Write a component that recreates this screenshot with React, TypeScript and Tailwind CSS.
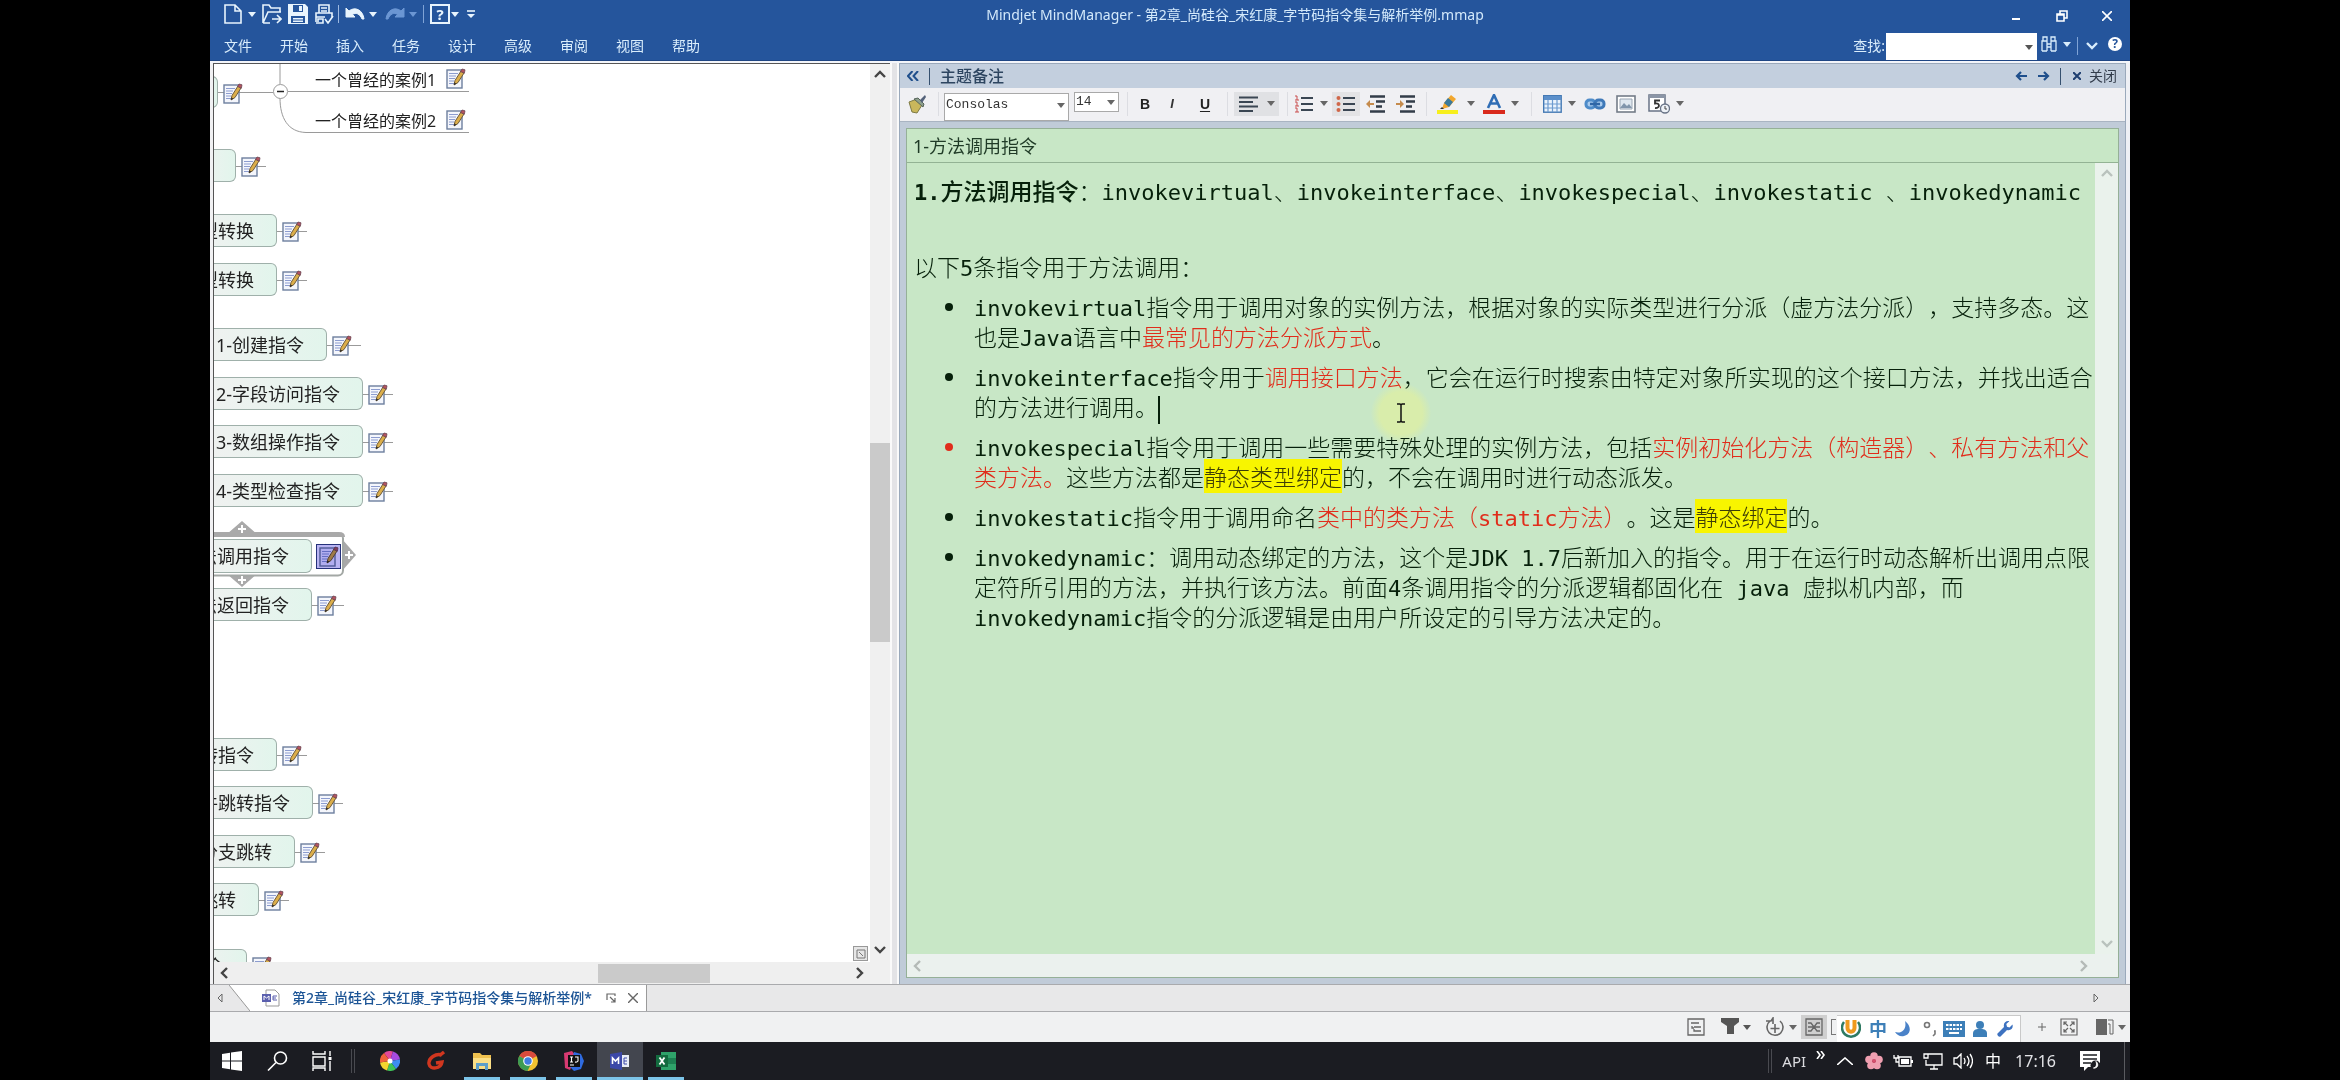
import type { ReactNode } from "react";

const ui = "font-['Noto_Sans','Noto_Sans_CJK_SC',sans-serif]";

type P = { className?: string; children?: ReactNode };

function Caret({ className = "" }: P) {
  return (
    <svg viewBox="0 0 8 5" className={`h-[5px] w-2 shrink-0 ${className}`} fill="currentColor" aria-hidden="true">
      <path d="M0 0h8L4 5z" />
    </svg>
  );
}

function Chevron({ dir, className = "" }: { dir: "up" | "down" | "left" | "right"; className?: string }) {
  const d = {
    up: "M1 9l5-5 5 5",
    down: "M1 3l5 5 5-5",
    left: "M9 1L4 6l5 5",
    right: "M3 1l5 5-5 5",
  }[dir];
  return (
    <svg viewBox="0 0 12 12" className={`size-3 shrink-0 ${className}`} fill="none" stroke="currentColor" strokeWidth="2.4" aria-hidden="true">
      <path d={d} />
    </svg>
  );
}

function Btn({ label, className = "", children }: P & { label: string }) {
  return (
    <button type="button" aria-label={label} className={`flex shrink-0 items-center justify-center ${className}`}>
      {children}
    </button>
  );
}

function Svg({ box, className = "", children }: P & { box: string }) {
  return (
    <svg viewBox={box} className={`shrink-0 ${className}`} fill="none" stroke="currentColor" strokeWidth="1.6" aria-hidden="true">
      {children}
    </svg>
  );
}

function NoteIcon() {
  return (
    <svg viewBox="0 0 20 21" className="h-[21px] w-5 shrink-0" aria-hidden="true">
      <rect x="1" y="2" width="15" height="18" fill="#f4f6fc" stroke="#6d7f9e" strokeWidth="1.4" />
      <path d="M3 5.5h9M3 8h7M3 10.500h6M3 13h5M3 15.500h5" stroke="#8c9ccf" strokeWidth="1.2" />
      <path d="M8 17l1-4.500L15 3l3 2-6 9.500z" fill="#dcae4a" stroke="#6e5b3c" strokeWidth="1" />
      <path d="M14.500 3.500L16 1l3 .8-.6 3.400z" fill="#b5535e" stroke="#6b4654" strokeWidth=".8" />
      <path d="M8 17l.5-2.500 1.800 1.300z" fill="#222" />
    </svg>
  );
}

function Title() {
  return (
    <div className="grid h-8 grid-cols-[1fr_auto_1fr] items-center">
      <div className="flex h-8 items-center pb-1 pl-3.5 text-[#e8f4fd]">
        <Btn label="新建" className="w-[18px]">
          <Svg box="0 0 18 20" className="h-5 w-[18px]">
            <path d="M1 1h10l6 6v12H1zM11 1v6h6" />
          </Svg>
        </Btn>
        <Caret className="ml-1.5" />
        <Btn label="打开" className="ml-1.5 w-5">
          <Svg box="0 0 20 20" className="size-5">
            <path d="M1 19V1h6l2 3h9v4M1 19l5-11h13M1 19h7M10 15h8M15 11l4 4-4 4" />
          </Svg>
        </Btn>
        <Btn label="保存" className="ml-1.5 w-5">
          <svg viewBox="0 0 20 20" className="size-5" fill="currentColor" aria-hidden="true">
            <path fillRule="evenodd" d="M0 0h17l3 3v17H0zM5 1v7h10V1zM3 12v7h14v-7zM11 2h3v5h-3zM5 14h10v1.500H5zM5 16.500h10V18H5z" />
          </svg>
        </Btn>
        <Btn label="打印" className="ml-1.5 w-5">
          <Svg box="0 0 20 20" className="size-5">
            <path d="M5 9V1h10v8M7 4h6M7 7h6M2 18V9h16v5M2 13h9M4 18v-3h5v4H2M11 15l3 4 5-7" />
          </Svg>
        </Btn>
        <span className="ml-1 h-[18px] w-px bg-[#9db9e0]" />
        <Btn label="撤销" className="ml-1.5 w-5">
          <svg viewBox="0 0 20 16" className="h-4 w-5" aria-hidden="true">
            <path d="M1 2v9h9L7.500 8.500C11 6 15 8 17 13h2C18 4 10 0 4 5z" fill="currentColor" stroke="currentColor" />
          </svg>
        </Btn>
        <Caret className="ml-1" />
        <Btn label="重做" className="ml-2 w-5 text-[#6b96d3]">
          <svg viewBox="0 0 20 16" className="h-4 w-5 -scale-x-100" aria-hidden="true">
            <path d="M1 2v9h9L7.500 8.500C11 6 15 8 17 13h2C18 4 10 0 4 5z" fill="currentColor" stroke="currentColor" />
          </svg>
        </Btn>
        <Caret className="ml-1 text-[#6b96d3]" />
        <span className="ml-1.5 h-[18px] w-px bg-[#7fa3d6]" />
        <Btn label="帮助" className="ml-1.5 size-5 border-2 border-current text-[15px] leading-none font-bold">
          ?
        </Btn>
        <Caret className="ml-px" />
        <Svg box="0 0 8 8" className="ml-2 size-2">
          <path d="M0 1h8" />
          <path d="M0 4h8L4 8z" fill="currentColor" stroke="none" />
        </Svg>
      </div>
      <h1 className="mb-0.5 ml-[130px] text-sm text-[#d3e9fb]">Mindjet MindManager - 第2章_尚硅谷_宋红康_字节码指令集与解析举例.mmap</h1>
      <div className="flex h-8 items-center justify-end gap-[34px] pr-[18px] text-white">
        <Btn label="最小化" className="mt-1.5 size-3">
          <span className="h-0.5 w-2 bg-white" />
        </Btn>
        <Btn label="还原" className="size-3">
          <Svg box="0 0 12 12" className="size-3">
            <path d="M1 4h7v7H1zM4 4V1h7v7H8M1 5h7" />
          </Svg>
        </Btn>
        <Btn label="关闭窗口" className="size-2.5">
          <Svg box="0 0 10 10" className="size-2.5">
            <path d="M0 0l10 10M10 0L0 10" />
          </Svg>
        </Btn>
      </div>
    </div>
  );
}

const menus = ["文件", "开始", "插入", "任务", "设计", "高级", "审阅", "视图", "帮助"];

function MenuBar() {
  return (
    <div className="flex h-7 items-center pr-2 pl-3.5 text-sm text-[#d9edfc]">
      <nav className="flex flex-1 gap-7">
        {menus.map((m) => (
          <button key={m} type="button" className="shrink-0">
            {m}
          </button>
        ))}
      </nav>
      <label htmlFor="find" className="mr-px">
        查找:
      </label>
      <div className="relative h-[27px] w-[151px] bg-white">
        <input id="find" type="text" className="size-full bg-transparent px-1 text-black outline-none" />
        <Caret className="absolute top-3 right-1 text-[#555]" />
      </div>
      <Btn label="查找主题" className="mb-1 ml-1 w-4">
        <Svg box="0 0 16 16" className="size-4">
          <path d="M2 1h4v4H2zM10 1h4v4h-4zM1 15V5h5v10M10 15V5h5v10M6 8h4M6 11h4M1 15h5M10 15h5" strokeWidth="1.300" />
        </Svg>
      </Btn>
      <Caret className="mb-1 ml-1.5" />
      <span className="ml-1.5 h-[18px] w-px bg-[#7fa3d6]" />
      <Chevron dir="down" className="ml-2 size-2.5" />
      <Btn label="帮助主题" className="mb-1 ml-2.5 size-3.5 rounded-full bg-white text-xs leading-none font-bold text-[#25559c]">
        ?
      </Btn>
    </div>
  );
}

/* Topic boxes run off the left side of the map; each keeps its note marker on the right. */
const topics = [
  { text: "", box: "top-[12px] h-[32px] w-[24px]", line: "w-[55px]" },
  { text: "", box: "top-[85px] h-[33px] w-[42px]", line: "w-[30px]" },
  { text: "型转换", box: "top-[150px] h-[33px] w-[83px]", line: "w-[30px]" },
  { text: "型转换", box: "top-[199px] h-[33px] w-[83px]", line: "w-[30px]" },
  { text: "1-创建指令", box: "top-[264px] h-[33px] w-[133px]", line: "w-[34px]" },
  { text: "2-字段访问指令", box: "top-[313px] h-[33px] w-[169px]", line: "w-[30px]" },
  { text: "3-数组操作指令", box: "top-[361px] h-[33px] w-[169px]", line: "w-[30px]" },
  { text: "4-类型检查指令", box: "top-[410px] h-[33px] w-[169px]", line: "w-[30px]" },
  { text: "法返回指令", box: "top-[524px] h-[33px] w-[118px]", line: "w-[32px]" },
  { text: "转指令", box: "top-[674px] h-[33px] w-[83px]", line: "w-[30px]" },
  { text: "件跳转指令", box: "top-[722px] h-[33px] w-[119px]", line: "w-[30px]" },
  { text: "分支跳转", box: "top-[771px] h-[33px] w-[101px]", line: "w-[30px]" },
  { text: "跳转", box: "top-[819px] h-[33px] w-[65px]", line: "w-[30px]" },
  { text: "令", box: "top-[885px] h-[33px] w-[53px]", line: "w-[24px]" },
];

function TopicText({ children }: P) {
  return (
    <span className="flex size-full items-center justify-end overflow-hidden rounded-r-md border border-l-0 border-[#9fb0aa] bg-linear-to-r from-[#f1f1f1] to-[#e2f5ec] pr-[22px] text-lg leading-none whitespace-nowrap text-[#222]">
      {children}
    </span>
  );
}

function MindMap() {
  return (
    <div className="relative min-h-0 flex-1 overflow-hidden bg-white">
      <svg viewBox="0 0 270 80" className="absolute top-0 left-0 h-20 w-[270px]" fill="none" stroke="#9a9a9a" aria-hidden="true">
        <path d="M66 0v20M74 27.500h181M66 34c0 20 8 34 26 34.500h163" />
        <circle cx="66.500" cy="27.500" r="7" fill="#fff" />
        <path d="M63 27.500h7" stroke="#222" strokeWidth="1.500" />
      </svg>
      <div className="absolute top-1 left-[101px] flex items-start gap-2.5 text-base leading-6 text-[#222]">
        <span>一个曾经的案例1</span>
        <NoteIcon />
      </div>
      <div className="absolute top-[45px] left-[101px] flex items-start gap-2.5 text-base leading-6 text-[#222]">
        <span>一个曾经的案例2</span>
        <NoteIcon />
      </div>
      {topics.map((t, i) => (
        <div key={i} className={`absolute left-[-20px] ${t.box}`}>
          <div className="relative flex size-full">
            <TopicText>{t.text}</TopicText>
            <span className={`absolute top-1/2 left-full h-px bg-[#9a9a9a] ${t.line}`} />
            <span className="absolute top-[7px] left-full ml-[5px]">
              <NoteIcon />
            </span>
          </div>
        </div>
      ))}
      <div className="absolute top-[457px] left-[-20px] h-[67px] w-[170px]">
        <svg viewBox="0 0 170 67" className="absolute inset-0 size-full" aria-hidden="true">
          <path d="M48 0l15 13H33zM48 66l15-13H33zM162 34l-14-16v32z" fill="#a9a9a9" />
          <rect x="-10" y="12.500" width="159" height="42" rx="5" fill="#fff" stroke="#a3a8a5" strokeWidth="2" />
          <path d="M0 11h145q6 0 6 5H0z" fill="#a9a9a9" />
          <path d="M48 4v8M44 8h8M48 55v8M44 59h8M155 30v8M151 34h8" stroke="#fff" strokeWidth="2" />
        </svg>
        <div className="absolute top-[18px] left-0 h-[34px] w-[118px]">
          <TopicText>法调用指令</TopicText>
        </div>
        <span className="absolute top-[23px] left-[122px] flex size-[25px] items-center justify-center border border-[#26327a] bg-[#b9b4f2]">
          <span className="mix-blend-multiply">
            <NoteIcon />
          </span>
        </span>
      </div>
      <Btn label="导航图" className="absolute right-0.5 bottom-px size-[15px] border border-[#999] bg-[#e6e6e6] text-[#777]">
        <Svg box="0 0 10 10" className="size-2.5">
          <path d="M1 1h8v8H1zM3 3l4 4" strokeWidth="1" />
        </Svg>
      </Btn>
    </div>
  );
}

function MapPane() {
  return (
    <div className="flex min-h-0 min-w-0 bg-[#f1f1f3] pl-[3px]">
      <div className="flex min-w-0 flex-1 border-t border-l border-[#555]">
        <div className="flex min-w-0 flex-1 flex-col">
          <MindMap />
          <div className="flex h-[22px] shrink-0 items-center bg-[#efefef] px-1 text-[#444]">
            <Chevron dir="left" />
            <div className="relative h-[19px] flex-1">
              <span className="absolute top-0 left-[59%] h-full w-[18%] bg-[#cacaca]" />
            </div>
            <Chevron dir="right" />
          </div>
        </div>
        <div className="flex w-5 shrink-0 flex-col items-center bg-[#f0f0f0] pt-1 pb-7 text-[#444]">
          <Chevron dir="up" />
          <div className="relative w-full flex-1">
            <span className="absolute top-[42%] left-0 h-[23%] w-full bg-[#cacaca]" />
          </div>
          <Chevron dir="down" />
        </div>
      </div>
      <div className="w-[9px] shrink-0 border-x-2 border-[#fafafa] bg-[#e3e3e6]" />
    </div>
  );
}

function Sep({ className = "" }: P) {
  return <span className={`h-6 w-px shrink-0 bg-[#dcdde2] ${className}`} />;
}

function ListIcon({ kind }: { kind: "num" | "dot" | "out" | "in" }) {
  const rows = [3, 9, 15];
  return (
    <svg viewBox="0 0 20 18" className="h-[18px] w-5" aria-hidden="true">
      {kind === "num" || kind === "dot" ? (
        <>
          <path d="M7 3h12M7 9h12M7 15h12" stroke="#3a4653" strokeWidth="1.800" />
          {kind === "dot"
            ? rows.map((y) => <circle key={y} cx="2.500" cy={y} r="2" fill="#d0674a" />)
            : rows.map((y) => <path key={y} d={`M1 ${y - 2}h2v4M1 ${y + 2}h4`} stroke="#c94d4d" strokeWidth="1" fill="none" />)}
        </>
      ) : (
        <>
          <path d="M4 1.500h15M10 6.500h9M10 11.500h6M4 16.500h15" stroke="#333d49" strokeWidth="2.400" />
          <path d={kind === "out" ? "M0 9l4-4v3h4v2H4v3z" : "M8 9L4 5v3H0v2h4v3z"} fill="#c58b4c" />
        </>
      )}
    </svg>
  );
}

function NotesToolbar() {
  return (
    <div className="flex h-[33px] shrink-0 items-center bg-[#f0f0f3] pb-0.5 pl-[7px] text-[#666]">
      <Btn label="格式刷" className="w-5">
        <svg viewBox="0 0 20 20" className="size-5" aria-hidden="true">
          <path d="M2 8l8-3 5 6-5 8-5-1z" fill="#c9b75c" stroke="#7d7a45" />
          <path d="M7 5l9 8 1-3-6-6z" fill="#8ea08c" stroke="#56645a" />
          <path d="M13 6l5-5 1 2-4 6z" fill="#54627a" />
        </svg>
      </Btn>
      <Sep className="ml-[11px]" />
      <div className="relative ml-[5px] h-7 w-[125px] shrink-0">
        <select aria-label="字体" className="size-full appearance-none border border-[#a9a9a9] bg-white pb-1.5 pl-px font-['Liberation_Mono',monospace] text-[13px] text-[#333]">
          <option>Consolas</option>
        </select>
        <Caret className="absolute top-[13px] right-1" />
      </div>
      <div className="relative mb-1 ml-[5px] h-5 w-[45px] shrink-0">
        <select aria-label="字号" className="block size-full appearance-none border border-[#a9a9a9] bg-white pl-px font-['Liberation_Mono',monospace] text-[13px] leading-none text-[#333]">
          <option>14</option>
        </select>
        <Caret className="absolute top-2 right-1" />
      </div>
      <Sep className="ml-2" />
      <Btn label="加粗" className="ml-[11px] w-3 font-['Liberation_Sans',sans-serif] text-sm font-black text-[#222]">
        B
      </Btn>
      <Btn label="斜体" className="ml-4 w-2.5 font-['Liberation_Sans',sans-serif] text-[13px] font-bold text-[#333] italic">
        I
      </Btn>
      <Btn label="下划线" className="ml-5 w-4 font-['Liberation_Sans',sans-serif] text-sm font-bold text-[#222] underline underline-offset-2">
        U
      </Btn>
      <Sep className="ml-3.5" />
      <Btn label="对齐方式" className="ml-1.5 h-6 w-[45px] gap-2 bg-[#e0e1e4]">
        <Svg box="0 0 20 16" className="h-4 w-5 text-[#3a4653]">
          <path d="M0 1.500h19M0 6h14M0 10.500h19M0 15h14" strokeWidth="1.800" />
        </Svg>
        <Caret />
      </Btn>
      <Sep className="ml-2" />
      <Btn label="编号列表" className="ml-1.5 w-5">
        <ListIcon kind="num" />
      </Btn>
      <Caret className="ml-1.5" />
      <Btn label="项目符号" className="ml-1 h-6 w-7 bg-[#e3e3e5]">
        <ListIcon kind="dot" />
      </Btn>
      <Btn label="减少缩进" className="ml-1.5 w-5">
        <ListIcon kind="out" />
      </Btn>
      <Btn label="增加缩进" className="ml-2.5 w-5">
        <ListIcon kind="in" />
      </Btn>
      <Sep className="ml-2.5" />
      <Btn label="突出显示" className="ml-2.5 w-[22px]">
        <svg viewBox="0 0 22 20" className="h-5 w-[22px]" aria-hidden="true">
          <path d="M0 16h21v4H0z" fill="#f7ef1d" />
          <path d="M5 15l2-6 7-8 5 4-7 8z" fill="#f2a72e" />
          <path d="M7 9l4-5 5 4-4 5z" fill="#3b7a9c" />
          <path d="M3 15l2-2 2 2z" fill="#333" />
        </svg>
      </Btn>
      <Caret className="ml-2" />
      <Btn label="字体颜色" className="ml-2 w-[22px]">
        <svg viewBox="0 0 22 20" className="h-5 w-[22px]" aria-hidden="true">
          <path d="M0 16h22v4H0z" fill="#d92a1c" />
          <path d="M5 14l6-13 6 13M7.500 9.500h7" fill="none" stroke="#2f6db5" strokeWidth="2.600" />
        </svg>
      </Btn>
      <Caret className="ml-1.5" />
      <Sep className="ml-3" />
      <Btn label="表格" className="ml-[11px] w-[19px]">
        <svg viewBox="0 0 19 18" className="h-[18px] w-[19px]" aria-hidden="true">
          <rect x=".7" y=".7" width="17.500" height="16.500" fill="#eaf3fc" stroke="#4479b4" strokeWidth="1.400" />
          <path d="M1 1h17v4H1z" fill="#5b8fca" />
          <path d="M5 5v12M9.500 5v12M14 5v12M1 9h17M1 13h17" stroke="#6d9bcf" strokeWidth="1.200" />
        </svg>
      </Btn>
      <Caret className="ml-1.5" />
      <Btn label="超链接" className="ml-2 w-[22px]">
        <svg viewBox="0 0 22 14" className="h-3.5 w-[22px]" fill="none" aria-hidden="true">
          <rect x="2" y="3" width="9" height="8" rx="3.500" fill="#a9cbee" stroke="#4f8cc9" strokeWidth="3" />
          <rect x="11" y="3" width="9" height="8" rx="3.500" fill="#a9cbee" stroke="#3e78b8" strokeWidth="3" />
          <path d="M6 7h10" stroke="#2f66a6" strokeWidth="2.500" />
        </svg>
      </Btn>
      <Btn label="图片" className="ml-2.5 w-5">
        <svg viewBox="0 0 20 18" className="h-[18px] w-5" fill="none" aria-hidden="true">
          <rect x="1" y="1" width="18" height="16" fill="#fff" stroke="#747c88" strokeWidth="1.600" />
          <path d="M4 4h12v10H4z" fill="#dfe7ef" stroke="#9aa5b3" />
          <path d="M4 13l4-5 3 3 2-2 3 4z" fill="#8195ab" />
        </svg>
      </Btn>
      <Btn label="日期时间" className="ml-3 w-[22px]">
        <svg viewBox="0 0 22 20" className="h-5 w-[22px]" fill="none" aria-hidden="true">
          <path d="M1 1h16v16H1z" fill="#fff" stroke="#687386" strokeWidth="1.500" />
          <path d="M1 1h16v3H1z" fill="#8b95a6" />
          <path d="M12 6.500H7v3c5-1 5.500 5 0 4.500" stroke="#333" strokeWidth="1.800" />
          <circle cx="17" cy="14.500" r="4.500" fill="#eef2f7" stroke="#687386" strokeWidth="1.300" />
          <path d="M17 12v3h2" stroke="#444" />
        </svg>
      </Btn>
      <Caret className="ml-1.5" />
    </div>
  );
}

function L({ children }: P) {
  return <span className="font-['DejaVu_Sans_Mono',monospace] text-[22px] leading-none font-normal">{children}</span>;
}
function Red({ children }: P) {
  return <span className="text-[#e02d1b]">{children}</span>;
}
function Mark({ children }: P) {
  return <mark className="bg-[#f8f500] text-[#3d3d08]">{children}</mark>;
}
function Item({ red, children }: P & { red?: boolean }) {
  return (
    <li className="mb-2.5 flex">
      <span className={`mt-3 mr-[21px] size-2 shrink-0 rounded-full ${red ? "bg-[#e02d1b]" : "bg-[#06200a]"}`} />
      <p className="min-w-0">{children}</p>
    </li>
  );
}

function NotesBody() {
  return (
    <div className="relative min-w-0 flex-1 pt-3 pl-[7px] font-['Noto_Sans_CJK_SC',sans-serif] text-[23px] leading-[30px] font-light text-[#06200a] [text-spacing-trim:space-all]">
      <span className="absolute top-[220px] left-[464px] size-[60px] rounded-full bg-[radial-gradient(circle,#d9edab_0%,#d9edab_50%,transparent_72%)]" />
      <svg viewBox="0 0 10 20" className="absolute top-[240px] left-[489px] h-5 w-2.5" fill="none" stroke="#111" strokeWidth="1.500" aria-hidden="true">
        <path d="M1 1h3l1 1 1-1h3M5 2v16M1 19h3l1-1 1 1h3" />
      </svg>
      <div className="relative">
        <h2 className="mb-[46px] whitespace-nowrap">
          <b className="font-medium">
            <span className="font-['DejaVu_Sans_Mono',monospace] text-[22px] leading-none font-bold">1.</span>
            方法调用指令
          </b>
          ：<L>invokevirtual</L>、<L>invokeinterface</L>、<L>invokespecial</L>、<L>invokestatic </L>、<L>invokedynamic</L>
        </h2>
        <p className="mb-2.5">
          以下<L>5</L>条指令用于方法调用：
        </p>
        <ul className="pl-[31px]">
          <Item>
            <L>invokevirtual</L>指令用于调用对象的实例方法，根据对象的实际类型进行分派（虚方法分派），支持多态。这也是<L>Java</L>语言中
            <Red>最常见的方法分派方式</Red>。
          </Item>
          <Item>
            <L>invokeinterface</L>指令用于<Red>调用接口方法</Red>，它会在运行时搜索由特定对象所实现的这个接口方法，并找出适合的方法进行调用。
            <span className="-my-1 inline-block h-7 w-0.5 bg-[#06200a] align-middle" />
          </Item>
          <Item red>
            <L>invokespecial</L>指令用于调用一些需要特殊处理的实例方法，包括<Red>实例初始化方法（构造器）、私有方法和父类方法。</Red>
            这些方法都是<Mark>静态类型绑定</Mark>的，不会在调用时进行动态派发。
          </Item>
          <Item>
            <L>invokestatic</L>指令用于调用命名
            <Red>
              类中的类方法（<L>static</L>方法）
            </Red>
            。这是<Mark>静态绑定</Mark>的。
          </Item>
          <Item>
            <L>invokedynamic</L>：调用动态绑定的方法，这个是<L>JDK 1.7</L>后新加入的指令。用于在运行时动态解析出调用点限定符所引用的方法，并执行该方法。前面
            <L>4</L>条调用指令的分派逻辑都固化在<L> java </L>虚拟机内部，而<L>invokedynamic</L>指令的分派逻辑是由用户所设定的引导方法决定的。
          </Item>
        </ul>
      </div>
    </div>
  );
}

function NotesPane() {
  return (
    <section className="mr-1 flex min-h-0 min-w-0 flex-col border border-b-0 border-[#9aa9bb] bg-[#c0cbd8]">
      <header className="flex h-[24px] shrink-0 items-center bg-[#c3cfde] pr-2 pl-[7px] text-[#1f4f8c]">
        <Svg box="0 0 12 10" className="h-2.5 w-3">
          <path d="M5.500 0L1 5l4.500 5M11 0L6.500 5 11 10" strokeWidth="2" />
        </Svg>
        <span className="ml-2.5 h-[17px] w-px bg-[#35506f]" />
        <h2 className="ml-2.5 flex-1 text-base leading-6 font-medium text-[#2d4560]">主题备注</h2>
        <Btn label="上一个" className="w-3">
          <Svg box="0 0 12 10" className="h-2.5 w-3">
            <path d="M12 5H2M6 1L2 5l4 4" strokeWidth="2.200" />
          </Svg>
        </Btn>
        <Btn label="下一个" className="ml-[11px] w-3">
          <Svg box="0 0 12 10" className="h-2.5 w-3">
            <path d="M0 5h10M6 1l4 4-4 4" strokeWidth="2.200" />
          </Svg>
        </Btn>
        <span className="ml-2.5 h-[17px] w-px bg-[#35506f]" />
        <button type="button" className="ml-3 flex items-center gap-2 text-sm text-[#333d4c]">
          <Svg box="0 0 8 8" className="size-2 text-[#1f3f70]">
            <path d="M0 0l8 8M8 0L0 8" strokeWidth="2" />
          </Svg>
          关闭
        </button>
      </header>
      <NotesToolbar />
      <div className="flex min-h-0 flex-1 flex-col border-t border-[#a9b4c2] px-1.5 py-1.5">
        <div className="flex min-h-0 flex-1 flex-col border border-[#95b097] bg-[#c8e7c6]">
          <div className="flex h-[34px] shrink-0 items-center border-b border-[#93b394] pl-1.5 text-lg text-[#1f3a26]">1-方法调用指令</div>
          <div className="flex min-h-0 flex-1">
            <NotesBody />
            <div className="flex w-[23px] shrink-0 flex-col items-center justify-between bg-[#eaf2ec] py-1 text-[#b9c2bd]">
              <Chevron dir="up" />
              <Chevron dir="down" />
            </div>
          </div>
          <div className="flex h-[23px] shrink-0 items-center justify-between bg-[#ebf1ee] pr-7 pl-1 text-[#b4bab7]">
            <Chevron dir="left" />
            <Chevron dir="right" />
          </div>
        </div>
      </div>
    </section>
  );
}

function TabRow() {
  return (
    <div className="flex h-7 shrink-0 items-stretch border-y border-[#a9aaad] bg-[#e8e8e9] pr-[31px] text-[#666]">
      <Btn label="向左滚动" className="w-[19px]">
        <Svg box="0 0 6 10" className="h-2.5 w-1.5">
          <path d="M5 1v8L1 5z" strokeWidth="1" />
        </Svg>
      </Btn>
      <svg viewBox="0 0 21 26" className="h-full w-[21px]" preserveAspectRatio="none" aria-hidden="true">
        <path d="M0 0h21v26z" fill="#fff" />
        <path d="M0 0l21 26" stroke="#999" />
      </svg>
      <div className="flex items-center border-r border-[#9a9a9a] bg-white pr-2 pl-3">
        <svg viewBox="0 0 18 18" className="size-[18px]" fill="none" aria-hidden="true">
          <path d="M4 1h9l4 4v12H4z" fill="#fff" stroke="#999" />
          <path d="M0 5h9v8H0z" fill="#5a5fae" />
          <path d="M2 11V7l2.500 2L7 7v4" stroke="#fff" />
          <path d="M15 7h-4v4h4M11 9h3" stroke="#5a5fae" />
        </svg>
        <button type="button" className="ml-3 text-sm font-medium text-[#1d5596]">
          第2章_尚硅谷_宋红康_字节码指令集与解析举例*
        </button>
        <Btn label="弹出" className="ml-3.5">
          <Svg box="0 0 10 10" className="size-2.5">
            <path d="M1 7V1h8v2M4 4l5 5M9 5v4H5" strokeWidth="1.200" />
          </Svg>
        </Btn>
        <Btn label="关闭标签" className="ml-3">
          <Svg box="0 0 10 10" className="size-2.5">
            <path d="M0 0l10 10M10 0L0 10" strokeWidth="1.400" />
          </Svg>
        </Btn>
      </div>
      <span className="flex-1" />
      <Btn label="向右滚动">
        <Svg box="0 0 6 10" className="h-2.5 w-1.5">
          <path d="M1 1v8l4-4z" strokeWidth="1" />
        </Svg>
      </Btn>
    </div>
  );
}

function StatusBar() {
  return (
    <div className="flex h-[30px] shrink-0 items-center justify-end bg-[#f0f1f2] pr-1 text-[#666]">
      <Btn label="任务信息">
        <Svg box="0 0 18 18" className="size-[18px]">
          <path d="M1 1h16v16H1zM4 5h8M7 9h7M9 13h5M5 8v2h2M7 11v2h2" strokeWidth="1.300" />
        </Svg>
      </Btn>
      <Btn label="筛选" className="ml-4 gap-1 text-[#555]">
        <svg viewBox="0 0 18 18" className="size-[18px]" fill="currentColor" aria-hidden="true">
          <path d="M0 0h18v4l-5 4v8H6V8L0 4z" />
        </svg>
        <Caret />
      </Btn>
      <Btn label="显示分支" className="ml-3.5 gap-1">
        <Svg box="0 0 20 20" className="size-5">
          <path d="M5 4a8 8 0 1 0 10 0M10 7v9M5.500 11.500h9M1 4h5l2-3v6" />
        </Svg>
        <Caret />
      </Btn>
      <Btn label="导图视图" className="ml-1 h-6 w-[26px] bg-[#cfcfcf]">
        <Svg box="0 0 18 18" className="size-[18px]">
          <path d="M1 1h16v16H1zM3 5h3l6 8h3M3 13h3l6-8h3M3 9h12" strokeWidth="1.300" />
        </Svg>
      </Btn>
      <span className="ml-1 h-4 w-[5px] border-y border-l border-[#777]" />
      <div className="ml-px flex h-[27px] w-[184px] items-center self-end border-t border-r border-[#c9c9c9] bg-white pl-1 text-[#3d7fb8]">
        <svg viewBox="0 0 20 20" className="size-5" fill="none" aria-hidden="true">
          <path d="M3 3a9 9 0 1 0 14 0" stroke="#2f7a63" strokeWidth="2.500" />
          <path d="M6.500 1v8c0 5 7 5 7 0V1" stroke="#ef9a1e" strokeWidth="4" />
        </svg>
        <span className="ml-2 text-lg leading-none font-bold">中</span>
        <svg viewBox="0 0 16 16" className="ml-2 size-4" fill="#4a82c8" aria-hidden="true">
          <path d="M10 0c7 5 6 14-1 15-4 .8-7-1-9-4 7 2 12-3 10-11z" />
        </svg>
        <Svg box="0 0 14 16" className="ml-3 h-4 w-3.5 text-[#777]">
          <circle cx="4" cy="4" r="2.500" />
          <path d="M11 10h1v3l-2 2" />
        </Svg>
        <svg viewBox="0 0 22 16" className="ml-1.5 h-4 w-[22px]" aria-hidden="true">
          <path d="M0 0h22v16H0z" fill="currentColor" />
          <path d="M3 4h16M3 8h16" stroke="#fff" strokeWidth="2" strokeDasharray="2.500 1" />
          <path d="M6 12h10" stroke="#fff" strokeWidth="2" />
        </svg>
        <svg viewBox="0 0 14 16" className="ml-2 h-4 w-3.5" fill="currentColor" aria-hidden="true">
          <circle cx="7" cy="4" r="4" />
          <path d="M0 16c-1-8 3-8 7-8s8 0 7 8z" />
        </svg>
        <svg viewBox="0 0 16 16" className="ml-2.5 size-4" fill="#3d72c0" aria-hidden="true">
          <path d="M15.500 3.500l-3 3-2.500-.7L9.300 3l3-2.800C9 -.5 6 2 7 6L.5 12.500c-1 1.500 1.500 4 3 3L10 9c4 1 6.500-2 5.500-5.500z" />
        </svg>
      </div>
      <Svg box="0 0 8 8" className="ml-[17px] size-2">
        <path d="M4 0v8M0 4h8" strokeWidth="1" />
      </Svg>
      <Btn label="适合页面" className="ml-3.5">
        <Svg box="0 0 18 18" className="size-[18px]">
          <path d="M1 1h16v16H1zM4 7V4h3M4 4l4 4M14 7V4h-3M14 4l-4 4M4 11v3h3M4 14l4-4M14 11v3h-3M14 14l-4-4" strokeWidth="1.200" />
        </Svg>
      </Btn>
      <Btn label="任务窗格" className="ml-[18px] gap-1">
        <svg viewBox="0 0 18 16" className="h-4 w-[18px]" aria-hidden="true">
          <path d="M0 0h11v16H0z" fill="#666" />
          <path d="M12 1h5v14h-3V5h-2" fill="none" stroke="#666" />
        </svg>
        <Caret />
      </Btn>
    </div>
  );
}

function TaskApp({ label, active, open, children }: P & { label: string; active?: boolean; open?: boolean }) {
  return (
    <button type="button" aria-label={label} className={`relative flex h-full w-[46px] items-center justify-center ${active ? "bg-[#43464f]" : ""}`}>
      {children}
      {(open || active) && <span className={`absolute bottom-0 h-[3px] bg-[#7cc4e8] ${active ? "inset-x-0" : "inset-x-[5px]"}`} />}
    </button>
  );
}

function TaskBar() {
  return (
    <footer className="flex h-[38px] shrink-0 items-center bg-[#1b1c22] text-white">
      <Btn label="开始菜单" className="ml-3 w-5">
        <svg viewBox="0 0 20 20" className="size-5" fill="#fff" aria-hidden="true">
          <path d="M0 3l8-1.200V9.500H0zM9 1.600L20 0v9.500H9zM0 10.500h8v7.800L0 17zM9 10.500h11V20L9 18.400z" />
        </svg>
      </Btn>
      <Btn label="搜索" className="ml-[25px] w-[21px]">
        <Svg box="0 0 21 20" className="h-5 w-[21px]">
          <circle cx="13.500" cy="7" r="6" />
          <path d="M9 11.500L1 19.500" />
        </Svg>
      </Btn>
      <Btn label="任务视图" className="ml-6 w-5">
        <Svg box="0 0 20 20" className="size-5">
          <path d="M1 0v3h12V0M1 6h12v9H1zM1 20v-3h12v3M18 0v5M18 10v10" strokeWidth="1.400" />
          <path d="M16.500 6h3v3h-3z" fill="#fff" stroke="none" />
        </Svg>
      </Btn>
      <span className="ml-[19px] h-6 w-1 border-x border-[#494a50]" />
      <div className="ml-3 flex h-full">
        <TaskApp label="彩色浏览器">
          <svg viewBox="0 0 20 20" className="size-5" aria-hidden="true">
            <path d="M10 10L4 2a10 10 0 0 1 9-1.500z" fill="#e4489a" />
            <path d="M10 10l3-9.500a10 10 0 0 1 7 8z" fill="#a64be0" />
            <path d="M10 10l10-1.500a10 10 0 0 1-4 9.500z" fill="#3d8df0" />
            <path d="M10 10l6 8a10 10 0 0 1-9 1.500z" fill="#3fc45a" />
            <path d="M10 10L7 19.500a10 10 0 0 1-7-8z" fill="#f3d52f" />
            <path d="M10 10L0 11.500A10 10 0 0 1 4 2z" fill="#f0623c" />
            <circle cx="10" cy="10" r="2.500" fill="#fff" />
          </svg>
        </TaskApp>
        <TaskApp label="录屏工具">
          <Svg box="0 0 20 20" className="size-5 text-[#d0361f]">
            <path d="M16 4C10 2 2 7 3 13c1 6 12 5 13-2l-6 1M13 5l5-4" strokeWidth="3.400" />
          </Svg>
        </TaskApp>
        <TaskApp label="文件资源管理器" open>
          <svg viewBox="0 0 20 18" className="h-[18px] w-5" aria-hidden="true">
            <path d="M1 1h7l2 2h9v14H1z" fill="#efc14f" />
            <path d="M1 6h18v11H1z" fill="#fbdf86" />
            <path d="M4 18v-7h12v7h-3v-4H7v4z" fill="#5e9fc9" />
          </svg>
        </TaskApp>
        <TaskApp label="Chrome" open>
          <svg viewBox="0 0 20 20" className="size-5" aria-hidden="true">
            <circle cx="10" cy="10" r="10" fill="#f2c230" />
            <path d="M10 10L1.300 5A10 10 0 0 1 18.700 5z" fill="#d94b3d" />
            <path d="M10 10L1.300 5a10 10 0 0 0 8.200 15l4-8z" fill="#3d9c53" />
            <circle cx="10" cy="10" r="4.800" fill="#fff" />
            <circle cx="10" cy="10" r="3.700" fill="#3f7de0" />
          </svg>
        </TaskApp>
        <TaskApp label="IntelliJ IDEA" open>
          <svg viewBox="0 0 20 20" className="size-5" aria-hidden="true">
            <path d="M0 2l8-2 4 5-6 14-5-2z" fill="#d83a72" />
            <path d="M10 1l7 2 3 7-3 8-7 2-4-4z" fill="#2f6be0" />
            <path d="M4 4h12v12H4z" fill="#111" />
            <path d="M6 6h3M7.500 6v5M6 11h3M11 6h3v4q-1 1.500-3 1M6 14h4" stroke="#fff" fill="none" strokeWidth="1.100" />
          </svg>
        </TaskApp>
        <TaskApp label="MindManager" active>
          <svg viewBox="0 0 20 18" className="h-[18px] w-5" aria-hidden="true">
            <path d="M10 3h9v12h-9z" fill="#e8ecf6" />
            <path d="M0 2l12-2v18L0 16z" fill="#3c48a8" />
            <path d="M2.500 12V6l3 3 3-3v6" stroke="#fff" fill="none" strokeWidth="1.600" />
            <path d="M17 6h-3v6h3M14 9h3" stroke="#3c48a8" fill="none" />
          </svg>
        </TaskApp>
        <TaskApp label="Excel" open>
          <svg viewBox="0 0 20 20" className="size-5" aria-hidden="true">
            <path d="M5 1h15v18H5z" fill="#2fa36a" />
            <path d="M12 7h8v6h-8z" fill="#1d8052" />
            <path d="M0 4h12v12H0z" fill="#136b3f" />
            <path d="M3.500 6.500l5 7M8.500 6.500l-5 7" stroke="#fff" strokeWidth="1.800" />
          </svg>
        </TaskApp>
      </div>
      <span className="flex-1" />
      <span className="h-6 w-1 border-x border-[#494a50]" />
      <span className="ml-2.5 text-[15px] text-[#dcdce0]">API</span>
      <Svg box="0 0 9 8" className="mb-3 ml-2.5 h-2 w-[9px]">
        <path d="M1 0l3 4-3 4M5 0l3 4-3 4" />
      </Svg>
      <Btn label="显示隐藏的图标" className="ml-3 w-4">
        <Svg box="0 0 16 8" className="h-2 w-4">
          <path d="M0 8l8-7 8 7" />
        </Svg>
      </Btn>
      <svg viewBox="0 0 18 18" className="ml-3 size-[18px]" fill="#ef9fb0" aria-hidden="true">
        <circle cx="9" cy="4" r="3.800" />
        <circle cx="14" cy="7.500" r="3.800" />
        <circle cx="12" cy="13.500" r="3.800" />
        <circle cx="6" cy="13.500" r="3.800" />
        <circle cx="4" cy="7.500" r="3.800" />
        <circle cx="9" cy="9" r="2" fill="#d8506e" />
      </svg>
      <Svg box="0 0 20 14" className="ml-2.5 h-3.5 w-5">
        <path d="M1 1v3h4V1M3 4v4h3M6 3h12v9H6z" strokeWidth="1.300" />
        <path d="M8 5h8v5H8zM18 6h2v3h-2z" fill="#fff" stroke="none" />
      </Svg>
      <Svg box="0 0 20 17" className="ml-2.5 h-[17px] w-5">
        <path d="M5 1h14v11H3V7M1 1h4v4H1zM11 12v4M7 16h8" strokeWidth="1.300" />
      </Svg>
      <Svg box="0 0 20 16" className="ml-2.5 h-4 w-5">
        <path d="M1 5h3l4-4v14l-4-4H1zM11 5q2 3 0 6M14 3q4 5 0 10M17 1q5 7 0 14" strokeWidth="1.300" />
      </Svg>
      <span className="ml-3 text-base leading-none">中</span>
      <time className="ml-3.5 text-base text-[#e2e2e6]">17:16</time>
      <Btn label="通知" className="ml-6 w-5">
        <svg viewBox="0 0 20 20" className="size-5" aria-hidden="true">
          <path d="M0 0h20v16H8l-4 4v-4H0z" fill="#fff" />
          <path d="M3 4h14M3 8h14M3 12h8" stroke="#1b1c22" strokeWidth="1.500" />
          <circle cx="15.500" cy="14.500" r="5" fill="#1b1c22" />
          <path d="M16 10.500c3 2.500 2 7-2.500 6.500 3-.5 3.500-3.500 2.500-6.500z" fill="#fff" stroke="#fff" />
        </svg>
      </Btn>
      <span className="mr-[5px] ml-6 h-full w-px bg-[#5a5b60]" />
    </footer>
  );
}

export default function App() {
  return (
    <div className="h-screen overflow-hidden bg-black px-[210px]">
      <div className={`flex h-full flex-col ${ui}`}>
        <header className="h-[61px] shrink-0 border-b border-[#1f4684] bg-[#25559c]">
          <Title />
          <MenuBar />
        </header>
        <main className="grid min-h-0 flex-1 grid-cols-[minmax(0,689fr)_minmax(0,1231fr)] grid-rows-[minmax(0,1fr)] border-t-2 border-[#f3f5fa] bg-[#eef0f5]">
          <MapPane />
          <NotesPane />
        </main>
        <TabRow />
        <StatusBar />
        <TaskBar />
      </div>
    </div>
  );
}
